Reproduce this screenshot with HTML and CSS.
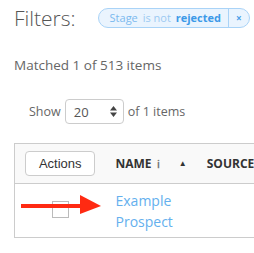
FILE: index.html
```html
<!DOCTYPE html>
<html lang="en">
<head>
<meta charset="UTF-8">
<title>Prospects</title>
<link rel="stylesheet" href="styles.css">
</head>
<body>

<div class="filters">
  <h1>Filters:</h1>
  <div class="badge">
    <span class="badge-text"><span class="field">Stage</span> <span class="op">is not</span> <b>rejected</b></span>
    <span class="badge-close">&times;</span>
  </div>
</div>

<p class="matched">Matched 1 of 513 items</p>

<div class="pager">
  Show
  <div class="select">
    <span>20</span>
    <svg width="7" height="11" viewBox="0 0 7 11"><path d="M3.5 0L7 4.5H0Z M3.5 11L0 6.5H7Z" fill="#444"/></svg>
  </div>
  of 1 items
</div>

<div class="table-wrap">
  <table class="grid">
    <thead>
      <tr>
        <th class="col-actions"><button class="btn">Actions</button></th>
        <th class="col-name">NAME <span class="info">&#8505;</span> <span class="sort">&#9650;</span></th>
        <th>SOURCE</th>
      </tr>
    </thead>
    <tbody>
      <tr>
        <td class="col-actions"><span class="check"></span></td>
        <td class="col-name"><a href="#">Example Prospect</a></td>
        <td></td>
      </tr>
    </tbody>
  </table>

  <!-- annotation arrow -->
  <svg class="arrow" width="84" height="22" viewBox="0 0 84 22">
    <rect x="0" y="9" width="64" height="4" fill="#ff2a12"/>
    <path d="M59 0L80 11L59 19Z" fill="#ff2a12"/>
  </svg>
</div>

</body>
</html>
```

FILE: styles.css
```css
* {
  box-sizing: border-box;
}

body {
  margin: 0;
  padding: 0 0 0 14px;
  font-family: "Open Sans", sans-serif;
  color: #555;
  background: #fff;
  overflow: hidden;
}

.filters {
  display: flex;
  align-items: center;
  gap: 22px;
  height: 36px;
  white-space: nowrap;
}

h1 {
  margin: 0;
  font-size: 21px;
  font-weight: 300;
  color: #555;
}

.badge {
  display: flex;
  flex-shrink: 0;
  align-items: stretch;
  height: 20px;
  border: 1px solid #a9d3f7;
  border-radius: 10px;
  background: #eaf4fe;
  font-size: 11px;
  line-height: 18px;
  color: #7bb9ee;
}

.badge-text {
  padding: 0 7px 0 11px;
  border-right: 1px solid #a9d3f7;
}

.badge-text .op {
  color: #9ccaf2;
  margin-left: 2px;
}

.badge-text b {
  color: #3d9ae8;
  font-weight: 700;
  margin-left: 2px;
}

.badge-close {
  width: 20px;
  text-align: center;
  color: #4a9fe8;
  font-weight: 700;
  font-size: 10px;
}

.matched {
  margin: 20px 0 0;
  font-size: 13.5px;
  color: #666;
}

.pager {
  display: flex;
  align-items: center;
  gap: 4px;
  margin: 25px 0 0 15px;
  font-size: 12.5px;
  color: #666;
}

.select {
  display: flex;
  align-items: center;
  justify-content: space-between;
  width: 59px;
  height: 25px;
  padding: 0 6px 0 8px;
  border: 1px solid #ccc;
  border-radius: 4px;
  font-size: 13px;
  color: #555;
}

.table-wrap {
  position: relative;
  margin-top: 19px;
  width: 400px;
}

.grid {
  border-collapse: collapse;
  width: 100%;
  border: 1px solid #ccc;
}

.grid thead tr {
  background: #f9f9f9;
  height: 40px;
}

.grid th {
  text-align: left;
  font-size: 12px;
  font-weight: 700;
  color: #333;
  padding: 0 10px;
  border-bottom: 1px solid #ccc;
  white-space: nowrap;
}

.grid th.col-actions,
.grid td.col-actions {
  width: 91px;
  padding: 0;
  text-align: center;
}

.grid .col-name {
  width: 90px;
}

.info {
  color: #777;
  margin-left: 2px;
  font-weight: 700;
  font-family: "DejaVu Serif", serif;
  font-size: 11px;
}

.sort {
  font-size: 8px;
  margin-left: 16px;
  position: relative;
  top: -2px;
}

.btn {
  width: 70px;
  height: 25px;
  border: 1px solid #ccc;
  border-radius: 4px;
  background: #fff;
  font-family: "Liberation Sans", Arial, sans-serif;
  font-size: 13px;
  color: #333;
  padding: 0;
}

.grid tbody tr {
  height: 54px;
  background: #fff;
}

.grid td {
  padding: 0 10px;
  vertical-align: middle;
}

.grid td a {
  display: block;
  width: 70px;
  font-size: 14px;
  line-height: 21px;
  color: #64b0ee;
  text-decoration: none;
}

.check {
  display: block;
  width: 17px;
  height: 17px;
  margin: 0 auto 2px;
  border: 1px solid #bbb;
}

.arrow {
  position: absolute;
  left: 7px;
  top: 52px;
}
```
